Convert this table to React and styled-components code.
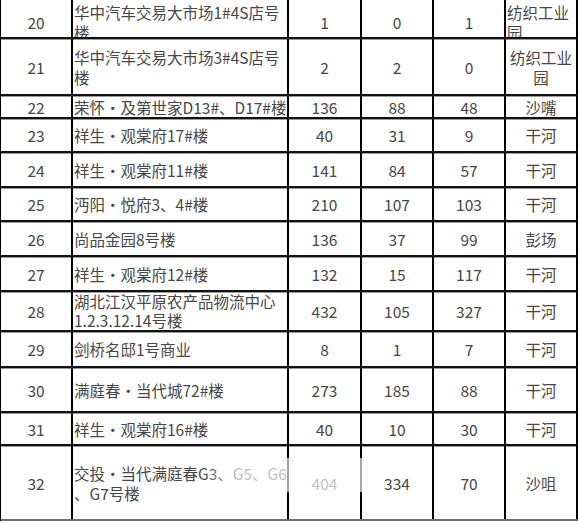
import React, { Fragment } from "react";
import styled, { createGlobalStyle } from "styled-components";

const GlobalStyle = createGlobalStyle`
  body {
    margin: 0;
    background: #fff;
  }
`;

const Table = styled.div`
  position: relative;
  width: 578px;
  box-sizing: border-box;
  border-left: 1px solid #000;
  font-family: "Noto Sans CJK SC", sans-serif;
  font-size: 15.5px;
  line-height: 20px;
  color: #474747;
`;

const Row = styled.div`
  display: grid;
  grid-template-columns: 72px 216px 73px 72px 72px 72px;
  height: ${(p) => p.$h}px;
  box-sizing: border-box;
  border-bottom: 2px solid ${(p) => (p.$last ? "#707070" : "#111")};
  box-shadow: ${(p) => (p.$last ? "none" : "0 1px 0 #9a9a9a")};
`;

const Cell = styled.div`
  display: flex;
  align-items: center;
  justify-content: ${(p) => (p.$left ? "flex-start" : "center")};
  text-align: ${(p) => (p.$left ? "left" : "center")};
  box-sizing: border-box;
  min-width: 0;
  padding-top: ${(p) => p.$pt || 0}px;
  padding-left: ${(p) => (p.$left ? 1 : 0)}px;
  border-right: 2px solid #000;
  overflow: hidden;
`;

const Lines = styled.div`
  display: flex;
  flex-direction: column;
  align-items: ${(p) => (p.$left ? "flex-start" : "center")};
  line-height: ${(p) => p.$lh || 20}px;
`;

const Line = styled.span`
  display: block;
  white-space: nowrap;
`;

const Dot = styled.span`
  display: inline-block;
  width: 1em;
  text-align: center;
`;

// the washed-out patch over row 32 in the screenshot
const Fade = styled.div`
  position: absolute;
  left: 200px;
  top: 458px;
  width: 166px;
  height: 34px;
  pointer-events: none;
  background: linear-gradient(
    to right,
    rgba(255, 255, 255, 0) 0%,
    rgba(255, 255, 255, 0.65) 22%,
    rgba(255, 255, 255, 0.65) 100%
  );
`;

const rows = [
  { no: 20, name: ["华中汽车交易大市场1#4S店号", "楼"], total: 1, a: 0, b: 1, area: ["纺织工业", "园"], h: 39, pt: 6, areaLeft: true },
  { no: 21, name: ["华中汽车交易大市场3#4S店号", "楼"], total: 2, a: 2, b: 0, area: ["纺织工业", "园"], h: 57 },
  { no: 22, name: ["荣怀·及第世家D13#、D17#楼"], total: 136, a: 88, b: 48, area: ["沙嘴"], h: 23 },
  { no: 23, name: ["祥生·观棠府17#楼"], total: 40, a: 31, b: 9, area: ["干河"], h: 34 },
  { no: 24, name: ["祥生·观棠府11#楼"], total: 141, a: 84, b: 57, area: ["干河"], h: 35 },
  { no: 25, name: ["沔阳·悦府3、4#楼"], total: 210, a: 107, b: 103, area: ["干河"], h: 34 },
  { no: 26, name: ["尚品金园8号楼"], total: 136, a: 37, b: 99, area: ["彭场"], h: 35 },
  { no: 27, name: ["祥生·观棠府12#楼"], total: 132, a: 15, b: 117, area: ["干河"], h: 35 },
  { no: 28, name: ["湖北江汉平原农产品物流中心", "1.2.3.12.14号楼"], total: 432, a: 105, b: 327, area: ["干河"], h: 40, lh: 19 },
  { no: 29, name: ["剑桥名邸1号商业"], total: 8, a: 1, b: 7, area: ["干河"], h: 36 },
  { no: 30, name: ["满庭春·当代城72#楼"], total: 273, a: 185, b: 88, area: ["干河"], h: 45 },
  { no: 31, name: ["祥生·观棠府16#楼"], total: 40, a: 10, b: 30, area: ["干河"], h: 33 },
  { no: 32, name: ["交投·当代满庭春G3、G5、G6", "、G7号楼"], total: 404, a: 334, b: 70, area: ["沙咀"], h: 75 },
];

// full-width middle dot like the original font
const withDots = (text) =>
  text.split("·").map((part, i) => (
    <Fragment key={i}>
      {i > 0 && <Dot>·</Dot>}
      {part}
    </Fragment>
  ));

const App = () => {
  return (
    <Fragment>
      <GlobalStyle />
      <Table>
        {rows.map((r, i) => (
          <Row key={r.no} $h={r.h} $last={i === rows.length - 1}>
            <Cell $pt={r.pt}>{r.no}</Cell>
            <Cell $pt={r.pt} $left>
              <Lines $left $lh={r.lh}>
                {r.name.map((l) => (
                  <Line key={l}>{withDots(l)}</Line>
                ))}
              </Lines>
            </Cell>
            <Cell $pt={r.pt}>{r.total}</Cell>
            <Cell $pt={r.pt}>{r.a}</Cell>
            <Cell $pt={r.pt}>{r.b}</Cell>
            <Cell $pt={r.pt} $left={r.areaLeft}>
              <Lines $left={r.areaLeft}>
                {r.area.map((l) => (
                  <Line key={l}>{l}</Line>
                ))}
              </Lines>
            </Cell>
          </Row>
        ))}
        <Fade />
      </Table>
    </Fragment>
  );
};

export default App;
